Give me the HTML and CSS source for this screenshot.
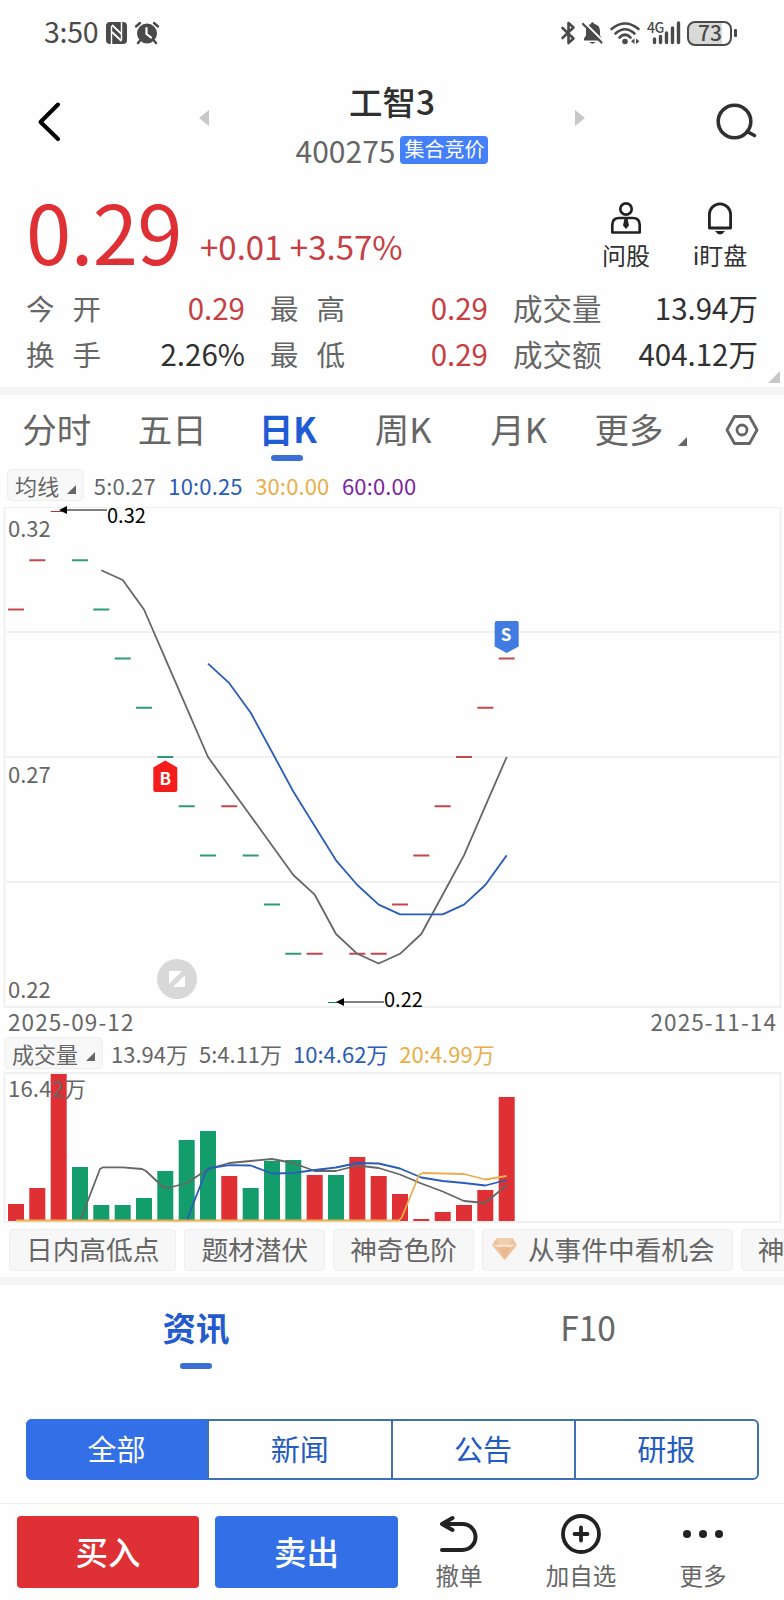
FILE: index.html
```
<!DOCTYPE html>
<html lang="zh-CN">
  <head>
    <meta charset="UTF-8" />
    <meta name="viewport" content="width=device-width, initial-scale=1.0" />
    <title>工智3 400275</title>
    <link rel="stylesheet" href="styles.css">
  </head>
  <body>
    <div class="status-bar">
      <span class="clock">3:50</span>
      <svg class="icon-nfc" width="21" height="22" viewBox="0 0 21 22">
        <rect x="0" y="0" width="21" height="22" rx="4" fill="#4a4a4a" />
        <path d="M5.500 22V4M15.500 18V0" stroke="#fff" stroke-width="1.400" fill="none" />
        <path d="M6 3l9.500 9M6 10l9.500 9" stroke="#fff" stroke-width="1.800" fill="none" />
      </svg>
      <svg class="icon-alarm" width="24" height="22" viewBox="0 0 24 22">
        <circle cx="12" cy="11.500" r="10" fill="#4a4a4a" />
        <path d="M1 4.500L5 1M23 4.500L19 1M5.500 18L3 21M18.500 18L21 21" stroke="#4a4a4a" stroke-width="2.400" stroke-linecap="round" />
        <path d="M11.500 6v6l4.500 3.500" stroke="#fff" stroke-width="2.200" fill="none" stroke-linecap="round" />
      </svg>
      <div class="status-right">
        <svg width="14" height="24" viewBox="0 0 14 24">
          <path d="M1.500 7l11 10.500L7.500 22V2l5 4.500L1.500 17" fill="none" stroke="#4a4a4a" stroke-width="2.600" stroke-linejoin="round" stroke-linecap="round" />
        </svg>
        <svg class="icon-mute" width="21" height="24" viewBox="0 0 21 24">
          <path d="M2 19.500v-2l2-3v-4.500a6.500 6.500 0 0 1 4.800-7a1.700 1.700 0 0 1 3.400 0A6.500 6.500 0 0 1 18 10v4.500l2 3v2z" fill="#4a4a4a" />
          <path d="M7.500 21h6q-3 3.500-6 0z" fill="#4a4a4a" />
          <path d="M2.500 1.500l19 19" stroke="#fff" stroke-width="2" />
          <path d="M1 3l18.500 18.500" stroke="#4a4a4a" stroke-width="2.200" stroke-linecap="round" />
        </svg>
        <svg class="icon-wifi" width="30" height="24" viewBox="0 0 30 24">
          <path d="M1.500 8Q15-3 28.500 8M5.500 12.500Q15 4 24.500 12.500M9.500 16.500Q15 11 20.500 16.500" fill="none" stroke="#4a4a4a" stroke-width="2.600" stroke-linecap="round" />
          <circle cx="15" cy="20.500" r="2.800" fill="#4a4a4a" />
          <path d="M24.500 17.500v5.500l-3.500-2.700zM26 17.500v5.500l3.500-2.700z" fill="#4a4a4a" />
        </svg>
        <svg class="icon-signal" width="34" height="26" viewBox="0 0 34 26">
          <text class="net" x="0" y="12.500">4G</text>
          <path d="M7.500 19v3.500M13.500 16.500v6M19.500 13v9.500M25.500 8v14.500M31.500 3v19.500" stroke="#4a4a4a" stroke-width="3.400" stroke-linecap="round" />
        </svg>
        <span class="battery">73</span>
        <i class="battery-tip"></i>
      </div>
    </div>

    <header class="header">
      <svg class="back" width="24" height="42" viewBox="0 0 24 42">
        <path d="M21 3.500L3.500 21L21 38" fill="none" stroke="#000" stroke-width="4" stroke-linecap="round" stroke-linejoin="round" />
      </svg>
      <svg class="arrow" width="10" height="16" viewBox="0 0 10 16"><path d="M10 0v16L0 8z" fill="#c8c8c8" /></svg>
      <div class="title">
        <h1>工智3</h1>
        <div class="code">400275<span class="badge">集合竞价</span></div>
      </div>
      <svg class="arrow" width="10" height="16" viewBox="0 0 10 16"><path d="M0 0v16L10 8z" fill="#c8c8c8" /></svg>
      <svg class="search" width="42" height="38" viewBox="0 0 42 38">
        <circle cx="18.500" cy="18.500" r="16.300" fill="none" stroke="#303030" stroke-width="3.600" />
        <path d="M31 28.500l7.500 4" stroke="#303030" stroke-width="3.600" stroke-linecap="round" />
      </svg>
    </header>

    <section class="quote">
      <div class="price-row">
        <span class="price">0.29</span>
        <span class="change">+0.01 +3.57%</span>
        <div class="quick">
          <svg width="32" height="34" viewBox="0 0 32 34">
            <circle cx="16" cy="8" r="5.700" fill="none" stroke="#222" stroke-width="2.700" />
            <path d="M2.300 31.500V24q0-7 7-7h13.400q7 0 7 7v7.500z" fill="none" stroke="#222" stroke-width="2.700" stroke-linejoin="round" />
            <path d="M14.500 17.500h3l1.500 7-3 3.500-3-3.500z" fill="#222" />
          </svg>
          <span>问股</span>
        </div>
        <div class="quick">
          <svg width="32" height="34" viewBox="0 0 32 34">
            <path d="M5.400 27V13.500a10.600 10.600 0 0 1 21.200 0V27z" fill="none" stroke="#222" stroke-width="2.800" stroke-linejoin="round" />
            <path d="M11 30h10q-5 7-10 0z" fill="#222" />
          </svg>
          <span>i盯盘</span>
        </div>
      </div>
      <div class="stats">
        <span class="label wide">今开</span><span class="value up">0.29</span>
        <span class="label wide next">最高</span><span class="value up">0.29</span>
        <span class="label next">成交量</span><span class="value">13.94万</span>
        <span class="label wide">换手</span><span class="value">2.26%</span>
        <span class="label wide next">最低</span><span class="value up">0.29</span>
        <span class="label next">成交额</span><span class="value">404.12万</span>
      </div>
      <i class="corner"></i>
    </section>

    <div class="divider"></div>

    <nav class="periods">
      <span>分时</span>
      <span>五日</span>
      <span class="active">日K</span>
      <span>周K</span>
      <span>月K</span>
      <span class="more">更多<i class="tri"></i></span>
      <svg width="34" height="30" viewBox="0 0 34 30">
        <path d="M9.500 1.500h15L32 15l-7.500 13.500h-15L2 15z" fill="none" stroke="#666" stroke-width="2.800" stroke-linejoin="round" />
        <circle cx="17" cy="15" r="5" fill="none" stroke="#666" stroke-width="2.800" />
      </svg>
    </nav>

    <div class="legend ma">
      <span class="picker">均线<i class="tri"></i></span>
      <span class="gray">5:0.27</span>
      <span class="blue">10:0.25</span>
      <span class="gold">30:0.00</span>
      <span class="purple">60:0.00</span>
    </div>

    <svg class="chart" width="784" height="502" viewBox="0 507 784 502">
      <!-- frame and grid -->
      <g stroke="#f0f0f0" fill="none" stroke-width="2">
        <path d="M4 507.500H781" stroke-width="1" />
        <path d="M4.500 507V1007H780.500V507" />
        <path d="M6 632H779M6 757H779M6 882H779" />
      </g>
      <g class="axis">
        <text x="8" y="537">0.32</text>
        <text x="8" y="783">0.27</text>
        <text x="8" y="998">0.22</text>
      </g>
      <!-- flat candles -->
      <path stroke="#c4484c" stroke-width="2" d="M8 609.500h16M29.300 560.300h16M221.300 806.200h16M306.700 953.800h16M349.300 953.800h16M370.700 953.800h16M392 904.600h16M413.300 855.400h16M434.700 806.200h16M456 757h16M477.300 707.800h16M498.700 658.600h16" />
      <path stroke="#2d9c76" stroke-width="2" d="M72 560.300h16M93.300 609.500h16M114.700 658.600h16M136 707.800h16M157.300 757h16M178.700 806.200h16M200 855.400h16M242.700 855.400h16M264 904.600h16M285.300 953.800h16" />
      <path stroke="#a83a3e" d="M50.700 511.500h12" />
      <path stroke="#12805c" d="M328 1002.500h12" />
      <polyline class="line gray" points="101.300,570.300 122.700,580 144,609.500 165.300,658.600 186.700,707.800 208,757 229.300,786.500 250.700,816 272,845.500 293.300,875 314.700,894.700 336,934 357.300,953.800 378.700,963.500 400,953.800 421.300,934 442.700,894.700 464,855.400 485.300,806.200 506.700,757" />
      <polyline class="line blue" points="208,663.600 229.300,683.200 250.700,712.700 272,752 293.300,791.500 314.700,826 336,860.300 357.300,885 378.700,904.600 400,914.400 421.300,914.400 442.700,914.400 464,904.600 485.300,885 506.700,855.400" />
      <!-- high / low marks -->
      <path d="M66 510H107M343 1002H384" stroke="#555" stroke-width="1.500" />
      <path d="M59 510l8-4v8zM336 1002l8-4v8z" fill="#000" />
      <text class="mark" x="107" y="523">0.32</text>
      <text class="mark" x="384" y="1007">0.22</text>
      <!-- trade flags -->
      <path d="M153.300 767.500L165.300 760.500L177.300 767.500V790q0 2-2 2h-20q-2 0-2-2z" fill="#f51c1c" />
      <text class="flag" x="165.300" y="785">B</text>
      <path d="M494.700 623q0-2 2-2h20q2 0 2 2V646.500L506.700 653L494.700 646.500z" fill="#3f7be0" />
      <text class="flag" x="506" y="641">S</text>
      <!-- fullscreen -->
      <circle cx="177" cy="979" r="20" fill="#d8d8d8" />
      <path d="M169 971h13l-13 13zM185 987h-12l12-12z" fill="#fff" />
    </svg>

    <div class="dates"><span>2025-09-12</span><span>2025-11-14</span></div>

    <div class="legend vol">
      <span class="picker">成交量<i class="tri"></i></span>
      <span class="gray">13.94万</span>
      <span class="gray">5:4.11万</span>
      <span class="blue">10:4.62万</span>
      <span class="gold">20:4.99万</span>
    </div>

    <svg class="chart" width="784" height="151" viewBox="0 1072 784 151">
      <rect x="4.500" y="1073" width="776" height="149" fill="none" stroke="#f0f0f0" stroke-width="2" />
      <path fill="#df3035" d="M8 1204h16v17h-16zM29.300 1188h16v33h-16zM50.700 1074h16v147h-16zM221.300 1176h16v45h-16zM306.700 1175h16v46h-16zM349.300 1157h16v64h-16zM370.700 1176h16v45h-16zM392 1194h16v27h-16zM413.300 1219h16v2h-16zM434.700 1212h16v9h-16zM456 1205h16v16h-16zM477.300 1190h16v31h-16zM498.700 1097h16v124h-16z" />
      <path fill="#149d6c" d="M72 1167h16v54h-16zM93.300 1205h16v16h-16zM114.700 1205h16v16h-16zM136 1198h16v23h-16zM157.300 1171h16v50h-16zM178.700 1140h16v81h-16zM200 1131h16v90h-16zM242.700 1188h16v33h-16zM264 1161h16v60h-16zM285.300 1160h16v61h-16zM328 1175h16v46h-16z" />
      <g class="axis"><text x="8" y="1097" textLength="78">16.42万</text></g>
      <polyline class="line gray" points="80,1221 100,1169 103,1167.300 122.700,1167.300 142,1169 146,1171 163,1187 168,1188 187,1183 208,1169 229.300,1163 250.700,1161 272,1159 293.300,1163 314.700,1171 336,1171 357.300,1165.500 378.700,1168 400,1174.500 421.300,1183.500 442.700,1191.500 464,1201 485.300,1203 506.700,1185" />
      <polyline class="line blue" points="187,1220 206,1171 210,1168 229.300,1165.200 250.700,1165.500 272,1173.500 293.300,1173 314.700,1170 336,1167.500 357.300,1163 378.700,1163.500 400,1168.500 421.300,1177.500 442.700,1181 464,1183 485.300,1185.500 506.700,1180" />
      <polyline class="line gold" points="16,1220.500 399,1220.500 402,1217 419,1175 423,1173 464,1174 485.300,1179.500 506.700,1176" />
    </svg>

    <div class="chips">
      <span>日内高低点</span>
      <span>题材潜伏</span>
      <span>神奇色阶</span>
      <span class="gem">
        <svg width="25" height="22" viewBox="0 0 25 22">
          <path d="M4.500 0h16L25 7 13.500 21.500h-1.500L0 7z" fill="#ecc29a" />
          <path d="M4.500 0h16l-3 6.500h-10z" fill="#f2cfac" />
          <path d="M0 7l7.500-.5h10L25 7l-7 2H7z" fill="#f8e2cb" />
          <path d="M7 9h11l-5.500 12z" fill="#e8b98e" />
        </svg>从事件中看机会</span>
      <span>神奇色阶</span>
    </div>

    <div class="divider"></div>

    <div class="news-tabs">
      <span class="active">资讯</span>
      <span>F10</span>
    </div>

    <div class="segments">
      <span class="active">全部</span>
      <span>新闻</span>
      <span>公告</span>
      <span>研报</span>
    </div>

    <footer class="trade-bar">
      <button class="buy">买入</button>
      <button class="sell">卖出</button>
      <div class="action">
        <svg width="42" height="42" viewBox="0 0 42 42">
          <path d="M4 11H24.500a13 13 0 0 1 0 26H4M14.500 5L4 11l10.500 6" fill="none" stroke="#222" stroke-width="4" stroke-linecap="round" stroke-linejoin="round" />
        </svg>
        <span>撤单</span>
      </div>
      <div class="action">
        <svg width="42" height="42" viewBox="0 0 42 42">
          <circle cx="21" cy="21" r="18" fill="none" stroke="#222" stroke-width="3.800" />
          <path d="M14.500 21h13M21 14.500v13" stroke="#222" stroke-width="3.800" stroke-linecap="round" />
        </svg>
        <span>加自选</span>
      </div>
      <div class="action">
        <svg width="42" height="42" viewBox="0 0 42 42" fill="#222">
          <circle cx="5" cy="21" r="4" /><circle cx="21" cy="21" r="4" /><circle cx="37" cy="21" r="4" />
        </svg>
        <span>更多</span>
      </div>
    </footer>
  </body>
</html>
```
FILE: styles.css
```
* {
  box-sizing: border-box;
}
body {
  width: 784px;
  height: 1600px;
  margin: 0;
  overflow: hidden;
  background: #fefefe;
  color: #303030;
  font-family: "Noto Sans CJK SC", sans-serif;
  line-height: 1;
}
svg {
  display: block;
  flex: none;
  overflow: visible;
}
span {
  white-space: nowrap;
}

/* status bar */
.status-bar {
  display: flex;
  align-items: center;
  height: 66px;
  padding: 0 47px 0 44px;
  color: #4a4a4a;
}
.clock {
  width: 62px;
  padding-bottom: 3px;
  font-size: 28.5px;
  letter-spacing: -0.3px;
}
.icon-alarm {
  margin-left: 8px;
}
.status-right {
  display: flex;
  align-items: center;
  margin-left: auto;
}
.icon-mute {
  margin-left: 7px;
}
.icon-wifi {
  margin-left: 7px;
}
.icon-signal {
  margin-left: 7px;
}
.net {
  font-size: 14px;
  font-weight: 500;
  letter-spacing: -0.5px;
  fill: #4a4a4a;
}
.battery {
  width: 45px;
  height: 25px;
  margin-left: 6px;
  border: 2px solid #4a4a4a;
  border-radius: 8px;
  background: linear-gradient(to right, #d9d9d9 33px, #fff 33px);
  font-size: 21px;
  font-weight: 500;
  line-height: 19px;
  padding-left: 9px;
}
.battery-tip {
  width: 3px;
  height: 8px;
  margin-left: 2px;
  border-radius: 1px;
  background: #4a4a4a;
}

/* header */
.header {
  display: flex;
  align-items: flex-start;
  height: 120px;
  padding: 0 26px 0 37px;
}
.back {
  margin-top: 35px;
}
.header .arrow {
  margin-top: 44px;
}
.back + .arrow {
  margin-left: 138px;
}
.search {
  margin: 37px 0 0 auto;
}
.title {
  width: 366px;
  text-align: center;
}
.title h1 {
  margin: 16px 0 0;
  font-size: 33.5px;
  font-weight: 500;
  line-height: 38px;
}
.code {
  display: flex;
  justify-content: center;
  align-items: center;
  height: 28px;
  margin-top: 16px;
  color: #666;
  font-size: 30px;
  line-height: 28px;
}
.badge {
  height: 28px;
  margin-left: 5px;
  padding: 0 4px;
  border-radius: 4px;
  background: #4580fb;
  color: #fff;
  font-size: 20px;
  line-height: 26px;
}

/* quote */
.quote {
  position: relative;
  height: 201px;
  padding: 0 26px;
}
.price-row {
  display: flex;
  align-items: flex-start;
  height: 99px;
}
.price {
  width: 174px;
  color: #df3035;
  font-size: 81.5px;
  letter-spacing: -0.6px;
  line-height: 87px;
}
.change {
  flex: 1;
  margin-top: 40px;
  color: #c63f43;
  font-size: 33px;
  line-height: 40px;
}
.quick {
  display: flex;
  flex-direction: column;
  align-items: center;
  width: 94px;
  padding-top: 15px;
  font-size: 24px;
}
.quick:last-child {
  margin-right: -9px;
}
.quick span {
  margin-top: 8px;
}
.stats {
  display: grid;
  grid-template-columns: 104px 115px 128px 115px 120px 1fr;
  grid-template-rows: 46px 46px;
  align-items: center;
  font-size: 29.5px;
}
.stats .value {
  text-align: right;
}
.stats .label {
  color: #666;
}
.stats .next {
  padding-left: 25px;
}
.stats .wide {
  font-size: 28.5px;
  letter-spacing: 18px;
}
.value.up {
  color: #c63f43;
}
.corner {
  position: absolute;
  right: 4px;
  bottom: 4px;
  border-left: 12px solid transparent;
  border-bottom: 12px solid #c8c8c8;
}
.divider {
  height: 8px;
  background: #f4f4f4;
}

/* period tabs */
.periods {
  display: flex;
  align-items: center;
  height: 71px;
  padding-bottom: 4px;
  color: #666;
  font-size: 34.5px;
}
.periods span {
  position: relative;
  left: -1px;
  width: 115.5px;
  text-align: center;
}
.periods .active {
  color: #1f5bd3;
  font-weight: 700;
}
.periods .active::after,
.news-tabs .active::after {
  content: "";
  position: absolute;
  left: 50%;
  bottom: -15px;
  width: 32px;
  height: 6px;
  margin-left: -17px;
  border-radius: 3px;
  background: #3a6fd8;
}
.periods .more {
  display: flex;
  align-items: flex-end;
  width: 147px;
  padding-left: 18px;
}
.periods svg {
  margin-top: 2px;
}
.tri {
  border-left: 9px solid transparent;
  border-bottom: 9px solid #666;
}
.more .tri {
  margin-left: 14px;
}

/* indicator legends */
.legend {
  display: flex;
  align-items: center;
  font-size: 22px;
}
.legend.ma {
  gap: 12.5px;
  height: 41px;
  padding: 0 0 3px 7px;
  letter-spacing: 0.15px;
}
.legend.vol {
  gap: 11px;
  height: 37px;
  padding: 0 0 2px 4px;
}
.legend .picker {
  display: flex;
  align-items: center;
  height: 32px;
  margin-right: -3px;
  padding: 0 7px;
  border: 1px solid #eee;
  border-radius: 5px;
  background: #f8f8f8;
  color: #666;
}
.picker .tri {
  margin: 8px 0 0 8px;
}
span.gray {
  color: #666;
}
span.blue {
  color: #2a5cb8;
}
span.gold {
  color: #e9ae4a;
}
span.purple {
  color: #7d26a0;
}

/* charts */
.axis {
  fill: #666;
  font-size: 22px;
}
.mark {
  fill: #000;
  font-size: 20px;
}
.flag {
  fill: #fff;
  font-size: 17px;
  font-weight: 700;
  text-anchor: middle;
}
.line {
  fill: none;
  stroke-width: 1.8;
  stroke-linejoin: round;
}
.line.gray {
  stroke: #666;
}
.line.blue {
  stroke: #2a5db8;
}
.line.gold {
  stroke: #e9ae4a;
}
.dates {
  display: flex;
  justify-content: space-between;
  height: 26px;
  padding: 1px 7px 0 8px;
  color: #666;
  font-size: 22.5px;
  letter-spacing: 1.1px;
}

/* strategy chips */
.chips {
  display: flex;
  gap: 8px;
  height: 54px;
  padding: 6px 0 0 9px;
  overflow: hidden;
}
.chips span {
  display: flex;
  flex: none;
  align-items: center;
  height: 42px;
  padding: 0 16px 2px;
  border: 1px solid #eee;
  border-radius: 4px;
  background: #f7f7f7;
  color: #666;
  font-size: 26.7px;
}
.chips .gem {
  padding: 0 17px 2px 9px;
}
.gem svg {
  margin-right: 11px;
}

/* news */
.news-tabs {
  display: flex;
  height: 134px;
  padding-top: 25px;
  color: #666;
  font-size: 33.5px;
}
.news-tabs span {
  position: relative;
  flex: 1;
  height: 34px;
  text-align: center;
}
.news-tabs .active {
  color: #245bcc;
  font-weight: 700;
}
.news-tabs .active::after {
  bottom: -25px;
  margin-left: -16px;
}
.segments {
  display: flex;
  height: 61px;
  margin: 0 25px 0 26px;
  border: 2px solid #4070b4;
  border-radius: 6px;
  color: #245bc0;
  font-size: 29px;
}
.segments span {
  flex: 1;
  line-height: 55px;
  text-align: center;
}
.segments span + span {
  border-left: 2px solid #4070b4;
}
.segments .active {
  margin: -2px 0 -2px -2px;
  border-radius: 6px 0 0 6px;
  background: #336fe6;
  color: #fff;
  line-height: 59px;
}

/* trade bar */
.trade-bar {
  display: flex;
  height: 97px;
  margin-top: 23px;
  padding: 12px 20px 0 17px;
  border-top: 1px solid #eee;
}
.trade-bar button {
  width: 182px;
  height: 72px;
  margin-right: 16px;
  padding: 0 0 3px;
  border: 0;
  border-radius: 4px;
  color: #fff;
  font-family: inherit;
  font-size: 32.5px;
  font-weight: 500;
}
.buy {
  background: #df3035;
}
.trade-bar .sell {
  width: 183px;
  margin-right: 0;
  background: #336fe6;
}
.action {
  display: flex;
  flex-direction: column;
  align-items: center;
  flex: 1;
  margin-top: -3px;
  color: #666;
  font-size: 23.5px;
}
.action span {
  margin-top: 9px;
}
```
